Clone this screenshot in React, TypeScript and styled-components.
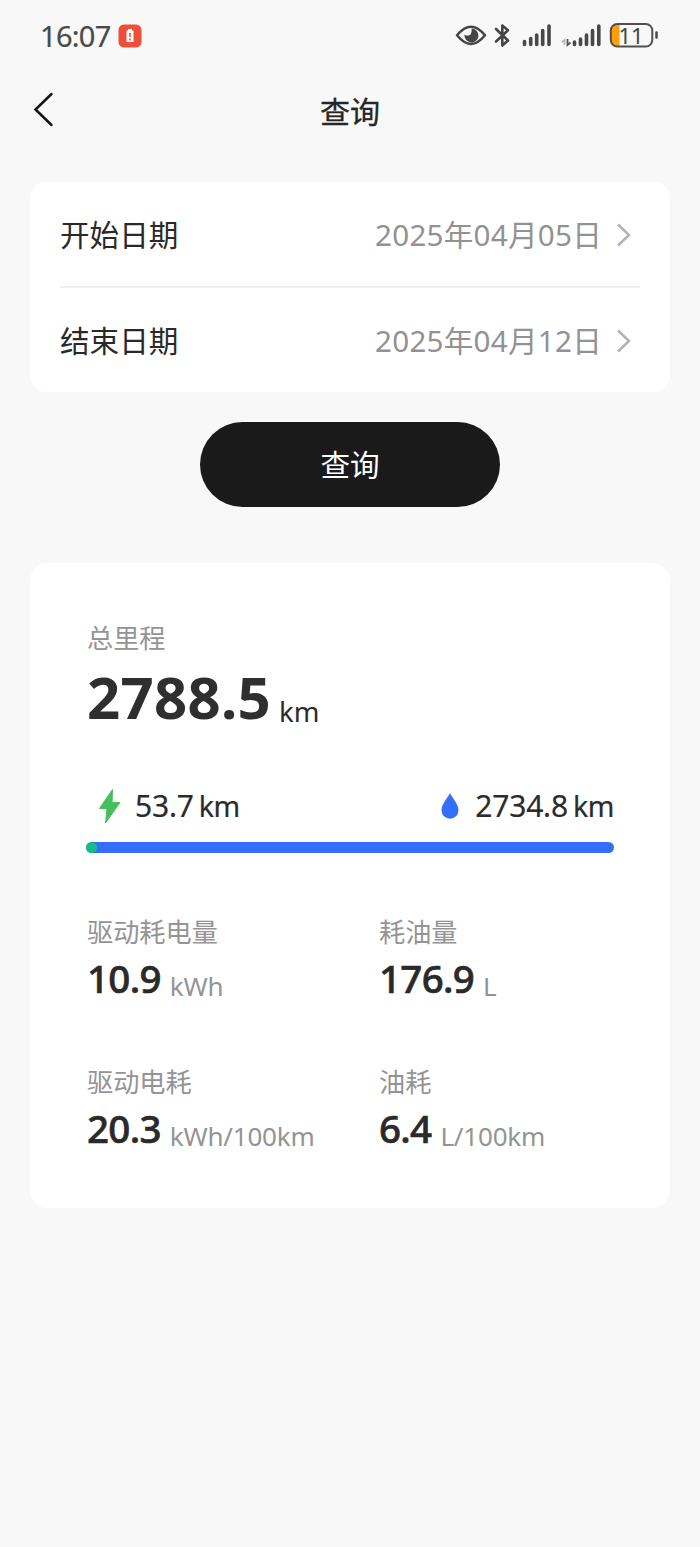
import React from "react";
import styled, { createGlobalStyle } from "styled-components";

const GlobalStyle = createGlobalStyle`
  *, *::before, *::after { box-sizing: border-box; }
  html, body { margin: 0; padding: 0; background: #f8f8f8; }
  body { font-family: "Noto Sans", "Noto Sans CJK SC", sans-serif; color: #2b2b2b; }
`;

const Screen = styled.main`
  width: 700px;
  min-height: 1547px;
  display: flex;
  flex-direction: column;
  background: #f8f8f8;
`;

const StatusBar = styled.header`
  height: 72px;
  padding: 0 41px 0 40px;
  display: flex;
  align-items: center;
  justify-content: space-between;
`;

const StatusGroup = styled.div`
  display: flex;
  align-items: center;
`;

const Clock = styled.span`
  width: 78px;
  font-size: 29px;
  line-height: 40px;
  letter-spacing: -0.7px;
  color: #4a4a4a;
  -webkit-text-stroke: 0.2px #4a4a4a;
`;

const NavBar = styled.nav`
  height: 110px;
  padding: 0 30px 30px;
  display: grid;
  grid-template-columns: 60px 1fr 60px;
  align-items: center;
`;

const BackButton = styled.button`
  display: flex;
  width: 40px;
  height: 44px;
  padding: 0;
  border: 0;
  background: none;
`;

const Title = styled.h1`
  margin: 0;
  font-size: 30px;
  line-height: 44px;
  font-weight: 400;
  text-align: center;
  color: #262626;
  -webkit-text-stroke: 0.3px #262626;
`;

const DateCard = styled.section`
  margin: 0 30px;
  height: 210px;
  padding: 0 30px;
  border-radius: 16px;
  background: #fff;
`;

const DateRow = styled.div`
  height: 106px;
  padding-top: 2px;
  display: flex;
  align-items: center;
  justify-content: space-between;
  font-size: 29.6px;
  line-height: 44px;
  & + & {
    height: 104px;
  }
  &:first-child {
    border-bottom: 2px solid #efefef;
  }
`;

const DateLabel = styled.span`
  color: #292929;
`;

const DateValue = styled.span`
  display: flex;
  align-items: center;
  gap: 14px;
  padding-right: 9px;
  letter-spacing: 0.25px;
  color: #929292;
`;

const QueryButton = styled.button`
  align-self: center;
  width: 300px;
  height: 85px;
  margin: 30px 0 56px;
  padding: 0;
  border: 0;
  border-radius: 43px;
  background: #1a1a1a;
  color: #fff;
  font: 400 29.6px/44px "Noto Sans", "Noto Sans CJK SC", sans-serif;
`;

const StatsCard = styled.section`
  margin: 0 30px;
  height: 645px;
  padding: 57px 56px 0 57px;
  border-radius: 18px;
  background: #fff;
`;

const Caption = styled.div`
  font-size: 26.2px;
  line-height: 36px;
  color: #949494;
`;

const Figure = styled.div`
  display: flex;
  align-items: baseline;
`;

const TotalValue = styled.span`
  font-size: 58px;
  line-height: 82px;
  font-weight: 700;
  letter-spacing: 0.3px;
  color: #2f2f2f;
`;

const TotalUnit = styled.span`
  margin-left: 8px;
  font-size: 27.5px;
  position: relative;
  top: 3px;
`;

const Split = styled.div`
  margin-top: 46px;
  height: 44px;
  display: flex;
  align-items: center;
  justify-content: space-between;
  padding-left: 11px;
`;

const SplitItem = styled.div<{ $gap: number }>`
  display: flex;
  align-items: center;
  gap: ${(p) => p.$gap}px;
  font-size: 30px;
  line-height: 44px;
  letter-spacing: -0.2px;
  -webkit-text-stroke: 0.2px #2b2b2b;
`;

const SplitUnit = styled.span`
  margin-left: 5px;
  font-size: 28.5px;
  letter-spacing: -0.4px;
`;

const Track = styled.div`
  margin: 14px 0 0 -1px;
  height: 11px;
  border-radius: 6px;
  background: #346ffc;
  overflow: hidden;
`;

const TrackFill = styled.div`
  width: 11px;
  height: 11px;
  border-radius: 6px;
  background: #14c07a;
`;

const Grid = styled.div`
  margin-top: 61px;
  display: grid;
  grid-template-columns: 292px 1fr;
  row-gap: 59px;
`;

const Metric = styled.div`
  height: 91px;
`;

const MetricValue = styled.span`
  font-size: 38.5px;
  line-height: 57px;
  font-weight: 500;
  letter-spacing: -0.7px;
  color: #2a2a2a;
  -webkit-text-stroke: 0.6px #2a2a2a;
`;

const MetricUnit = styled.span`
  margin-left: 9px;
  font-size: 26px;
  letter-spacing: -0.2px;
  position: relative;
  top: 3px;
  color: #949494;
`;

const BatteryAlert = () => (
  <svg width="24" height="24" viewBox="0 0 24 24">
    <rect x="0.5" y="0.5" width="23" height="23" rx="5.5" fill="#ee4f3b" />
    <path d="M10 5h4v1.5h1.5V18h-7V6.500H10z" fill="#fff" />
    <path d="M12 9v4M12 14.500v2" stroke="#ee4f3b" strokeWidth="1.6" />
  </svg>
);

const StatusIcons = () => (
  <svg width="204" height="44" viewBox="455 14 204 44" fill="none">
    <path d="M457 35.300Q471 18 485 35.300Q471 52.500 457 35.300Z" stroke="#454545" strokeWidth="2.5" strokeLinejoin="round" />
    <path d="M471.500 28.500a7 7 0 1 1-7 6c1.500 1.500 5 1.500 6.300-.6c1.100-1.800.9-3.800.7-5.400z" fill="#454545" />
    <path d="M496 29l12 11.500l-5.700 5V25.500l5.700 4.700L496 41.500" stroke="#454545" strokeWidth="2.600" strokeLinecap="round" strokeLinejoin="round" />
    <path d="M524.500 41.500v3M530.700 38.500v6M536.700 35v9.500M542.700 30.500v14M549 26v18.500" stroke="#484848" strokeWidth="3.600" strokeLinecap="round" />
    <path d="M564.500 45v-5l-2.500 2" stroke="#b5b5b5" strokeWidth="1.800" />
    <path d="M567.500 39v6l3-2.500" stroke="#555" strokeWidth="1.800" />
    <path d="M574.500 42v2.500M580.500 39v5.500M586.500 35v9.500M592.500 30.500v14M598.800 26v18.500" stroke="#484848" strokeWidth="3.600" strokeLinecap="round" />
    <path d="M619.500 24.500h-3.500q-5 0-5 5v11.500q0 5 5 5h3.500z" fill="#ff9d0a" />
    <rect x="610.800" y="24" width="41.500" height="22.500" rx="6.500" stroke="#505050" strokeWidth="2" />
    <path d="M656.500 32.500v5" stroke="#484848" strokeWidth="2.500" strokeLinecap="round" />
    <text x="631" y="43.500" fontFamily="Noto Sans, sans-serif" fontSize="22" fontWeight="400" textAnchor="middle" fill="#454545">11</text>
  </svg>
);

const Chevron = () => (
  <svg width="15" height="26" viewBox="0 0 15 26" fill="none">
    <path d="M2 2.500L13 13L2 23.500" stroke="#b3b3b3" strokeWidth="2.500" />
  </svg>
);

const Bolt = () => (
  <svg width="24" height="36" viewBox="0 0 24 36">
    <path d="M14.500 1.500L1.500 20.500H9L7.500 35L22 14.500H14z" fill="#47bf5d" stroke="#47bf5d" strokeLinejoin="round" />
  </svg>
);

const Drop = () => (
  <svg width="18" height="28" viewBox="0 0 18 28">
    <path d="M9 1C7 5.500.5 12 .5 18.200a8.500 8.500 0 0 0 17 0C17.500 12 11 5.500 9 1z" fill="#346ffc" />
  </svg>
);

const dates = [
  { label: "开始日期", value: "2025年04月05日" },
  { label: "结束日期", value: "2025年04月12日" },
];

const metrics = [
  { label: "驱动耗电量", value: "10.9", unit: "kWh" },
  { label: "耗油量", value: "176.9", unit: "L" },
  { label: "驱动电耗", value: "20.3", unit: "kWh/100km" },
  { label: "油耗", value: "6.4", unit: "L/100km" },
];

export default function App() {
  return (
    <Screen>
      <GlobalStyle />
      <StatusBar>
        <StatusGroup>
          <Clock>16:07</Clock>
          <BatteryAlert />
        </StatusGroup>
        <StatusIcons />
      </StatusBar>
      <NavBar>
        <BackButton aria-label="返回">
          <svg width="28" height="40" viewBox="0 0 28 40" fill="none">
            <path d="M21.500 4L5.500 19.500L21.500 35" stroke="#141414" strokeWidth="2.500" strokeLinecap="round" />
          </svg>
        </BackButton>
        <Title>查询</Title>
      </NavBar>
      <DateCard>
        {dates.map((d) => (
          <DateRow key={d.label}>
            <DateLabel>{d.label}</DateLabel>
            <DateValue>
              {d.value}
              <Chevron />
            </DateValue>
          </DateRow>
        ))}
      </DateCard>
      <QueryButton>查询</QueryButton>
      <StatsCard>
        <Caption>总里程</Caption>
        <Figure>
          <TotalValue>2788.5</TotalValue>
          <TotalUnit>km</TotalUnit>
        </Figure>
        <Split>
          <SplitItem $gap={13}>
            <Bolt />
            <span>53.7<SplitUnit>km</SplitUnit></span>
          </SplitItem>
          <SplitItem $gap={16}>
            <Drop />
            <span>2734.8<SplitUnit>km</SplitUnit></span>
          </SplitItem>
        </Split>
        <Track>
          <TrackFill />
        </Track>
        <Grid>
          {metrics.map((m) => (
            <Metric key={m.label}>
              <Caption>{m.label}</Caption>
              <Figure>
                <MetricValue>{m.value}</MetricValue>
                <MetricUnit>{m.unit}</MetricUnit>
              </Figure>
            </Metric>
          ))}
        </Grid>
      </StatsCard>
    </Screen>
  );
}
